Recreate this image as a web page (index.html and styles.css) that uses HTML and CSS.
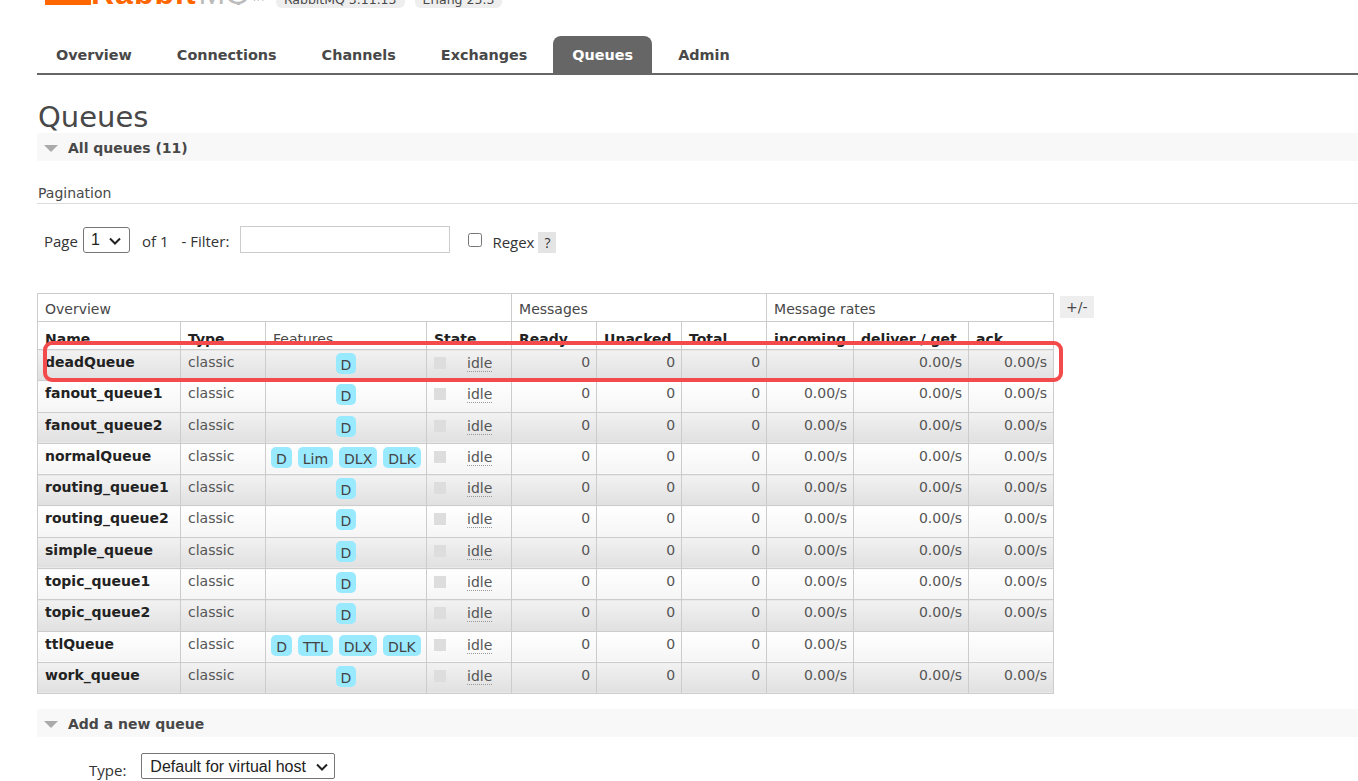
FILE: index.html
```html
<!DOCTYPE html>
<html>
<head>
<meta charset="utf-8">
<title>RabbitMQ Management</title>
<link rel="stylesheet" href="styles.css">
</head>
<body>
<div class="top">
  <div class="brand">
    <div class="logo">
      <svg class="logo-mark" width="46" height="40" viewBox="0 0 46 40"><path d="M0 0h10v28h26V0h10v40H0z" fill="#ff6600"/></svg>
      <span class="logo-rabbit">Rabbit</span><span class="logo-mq">MQ</span><span class="logo-tm">TM</span>
    </div>
    <span class="ver">RabbitMQ 3.11.13</span>
    <span class="ver">Erlang 25.3</span>
  </div>
</div>

<ul class="tabs">
  <li class="tab">Overview</li>
  <li class="tab">Connections</li>
  <li class="tab">Channels</li>
  <li class="tab">Exchanges</li>
  <li class="tab active">Queues</li>
  <li class="tab">Admin</li>
</ul>

<main class="main">
  <h1 class="title">Queues</h1>
  <div class="section-bar"><span class="tri"></span><span>All queues (11)</span></div>

  <h3 class="sub">Pagination</h3>
  <div class="filter">
    <label class="lbl">Page</label>
    <span class="selwrap page">
      <select class="sel sel-page"><option>1</option></select>
      <svg class="chev" width="12" height="8" viewBox="0 0 12 8"><path d="M1 1.5l5 5 5-5" fill="none" stroke="#222" stroke-width="2"/></svg>
    </span>
    <span class="lbl of">of 1</span>
    <span class="lbl flt">- Filter:</span>
    <input class="filter-input" type="text">
    <input class="chk" type="checkbox">
    <span class="lbl regex">Regex</span>
    <span class="help">?</span>
  </div>

  <div class="table-row">
    <div class="table-wrap">
      <table class="list">
        <colgroup>
          <col style="width:143px"><col style="width:85px"><col style="width:161px"><col style="width:85px">
          <col style="width:85px"><col style="width:85px"><col style="width:85px">
          <col style="width:87px"><col style="width:115px"><col style="width:85px">
        </colgroup>
        <thead>
          <tr class="h1r"><th colspan="4">Overview</th><th colspan="3">Messages</th><th colspan="3">Message rates</th></tr>
          <tr class="h2r"><th class="b">Name</th><th class="b">Type</th><th>Features</th><th class="b">State</th><th class="b">Ready</th><th class="b">Unacked</th><th class="b">Total</th><th class="b">incoming</th><th class="b">deliver / get</th><th class="b">ack</th></tr>
        </thead>
        <tbody>
          <tr class="alt1"><td class="name">deadQueue</td><td class="type">classic</td><td class="feat"><div class="badges"><span class="badge">D</span></div></td><td class="state"><div class="st"><span class="sq"></span><span class="idle">idle</span></div></td><td class="num">0</td><td class="num">0</td><td class="num">0</td><td class="num"></td><td class="num">0.00/s</td><td class="num">0.00/s</td></tr>
          <tr class="alt2"><td class="name">fanout_queue1</td><td class="type">classic</td><td class="feat"><div class="badges"><span class="badge">D</span></div></td><td class="state"><div class="st"><span class="sq"></span><span class="idle">idle</span></div></td><td class="num">0</td><td class="num">0</td><td class="num">0</td><td class="num">0.00/s</td><td class="num">0.00/s</td><td class="num">0.00/s</td></tr>
          <tr class="alt1"><td class="name">fanout_queue2</td><td class="type">classic</td><td class="feat"><div class="badges"><span class="badge">D</span></div></td><td class="state"><div class="st"><span class="sq"></span><span class="idle">idle</span></div></td><td class="num">0</td><td class="num">0</td><td class="num">0</td><td class="num">0.00/s</td><td class="num">0.00/s</td><td class="num">0.00/s</td></tr>
          <tr class="alt2"><td class="name">normalQueue</td><td class="type">classic</td><td class="feat"><div class="badges"><span class="badge">D</span><span class="badge">Lim</span><span class="badge">DLX</span><span class="badge">DLK</span></div></td><td class="state"><div class="st"><span class="sq"></span><span class="idle">idle</span></div></td><td class="num">0</td><td class="num">0</td><td class="num">0</td><td class="num">0.00/s</td><td class="num">0.00/s</td><td class="num">0.00/s</td></tr>
          <tr class="alt1"><td class="name">routing_queue1</td><td class="type">classic</td><td class="feat"><div class="badges"><span class="badge">D</span></div></td><td class="state"><div class="st"><span class="sq"></span><span class="idle">idle</span></div></td><td class="num">0</td><td class="num">0</td><td class="num">0</td><td class="num">0.00/s</td><td class="num">0.00/s</td><td class="num">0.00/s</td></tr>
          <tr class="alt2"><td class="name">routing_queue2</td><td class="type">classic</td><td class="feat"><div class="badges"><span class="badge">D</span></div></td><td class="state"><div class="st"><span class="sq"></span><span class="idle">idle</span></div></td><td class="num">0</td><td class="num">0</td><td class="num">0</td><td class="num">0.00/s</td><td class="num">0.00/s</td><td class="num">0.00/s</td></tr>
          <tr class="alt1"><td class="name">simple_queue</td><td class="type">classic</td><td class="feat"><div class="badges"><span class="badge">D</span></div></td><td class="state"><div class="st"><span class="sq"></span><span class="idle">idle</span></div></td><td class="num">0</td><td class="num">0</td><td class="num">0</td><td class="num">0.00/s</td><td class="num">0.00/s</td><td class="num">0.00/s</td></tr>
          <tr class="alt2"><td class="name">topic_queue1</td><td class="type">classic</td><td class="feat"><div class="badges"><span class="badge">D</span></div></td><td class="state"><div class="st"><span class="sq"></span><span class="idle">idle</span></div></td><td class="num">0</td><td class="num">0</td><td class="num">0</td><td class="num">0.00/s</td><td class="num">0.00/s</td><td class="num">0.00/s</td></tr>
          <tr class="alt1"><td class="name">topic_queue2</td><td class="type">classic</td><td class="feat"><div class="badges"><span class="badge">D</span></div></td><td class="state"><div class="st"><span class="sq"></span><span class="idle">idle</span></div></td><td class="num">0</td><td class="num">0</td><td class="num">0</td><td class="num">0.00/s</td><td class="num">0.00/s</td><td class="num">0.00/s</td></tr>
          <tr class="alt2"><td class="name">ttlQueue</td><td class="type">classic</td><td class="feat"><div class="badges"><span class="badge">D</span><span class="badge">TTL</span><span class="badge">DLX</span><span class="badge">DLK</span></div></td><td class="state"><div class="st"><span class="sq"></span><span class="idle">idle</span></div></td><td class="num">0</td><td class="num">0</td><td class="num">0</td><td class="num">0.00/s</td><td class="num"></td><td class="num"></td></tr>
          <tr class="alt1"><td class="name">work_queue</td><td class="type">classic</td><td class="feat"><div class="badges"><span class="badge">D</span></div></td><td class="state"><div class="st"><span class="sq"></span><span class="idle">idle</span></div></td><td class="num">0</td><td class="num">0</td><td class="num">0</td><td class="num">0.00/s</td><td class="num">0.00/s</td><td class="num">0.00/s</td></tr>
        </tbody>
      </table>
      <div class="highlight"></div>
    </div>
    <span class="plusminus">+/-</span>
  </div>

  <div class="section-bar add"><span class="tri"></span><span>Add a new queue</span></div>
  <div class="type-row">
    <label class="type-lbl">Type:</label>
    <span class="selwrap type">
      <select class="sel sel-type"><option>Default for virtual host</option></select>
      <svg class="chev" width="12" height="8" viewBox="0 0 12 8"><path d="M1 1.5l5 5 5-5" fill="none" stroke="#222" stroke-width="2"/></svg>
    </span>
  </div>
</main>
</body>
</html>
```
FILE: styles.css
```css
html, body {
  margin: 0;
  padding: 0;
  background: #fff;
  overflow: hidden;
}
body {
  font-family: "DejaVu Sans", Verdana, sans-serif;
  font-size: 14px;
  color: #484848;
}
.top {
  height: 36px;
}
.brand {
  height: 8px;
  display: flex;
  align-items: flex-end;
  padding-left: 45px;
}
.logo {
  display: flex;
  align-items: flex-end;
  height: 40px;
  margin-bottom: 3px;
}
.logo-mark {
  display: block;
}
.logo-rabbit, .logo-mq {
  font-family: "Liberation Sans", Arial, sans-serif;
  font-weight: bold;
  font-size: 32px;
  line-height: 24px;
  height: 24px;
  overflow: hidden;
  color: #ff6600;
}
.logo-rabbit { margin-left: 0; letter-spacing: 1px; }
.logo-mq {
  color: #bbb;
  font-weight: normal;
  margin-left: 2px;
}
.logo-tm {
  font-size: 8px;
  color: #aaa;
  margin-left: 2px;
  line-height: 12px;
}
.ver {
  background: #eee;
  border-radius: 6px;
  padding: 4px 8px 2px;
  font-size: 12.5px;
  line-height: 12px;
  margin-left: 10px;
  color: #484848;
}
.ver:first-of-type { margin-left: 12px; }

.tabs {
  list-style: none;
  margin: 0 0 0 37px;
  padding: 0;
  display: flex;
  gap: 7px;
  border-bottom: 2px solid #666;
  height: 37px;
}
.tab {
  padding: 0 19px;
  height: 37px;
  line-height: 39px;
  font-weight: bold;
  font-size: 14.4px;
  color: #484848;
}
.tab.active {
  background: #666;
  color: #fff;
  border-radius: 8px 8px 0 0;
}

.main {
  padding-left: 37px;
}
.title {
  margin: 26px 0 0 1px;
  font-size: 29px;
  line-height: 32px;
  font-weight: normal;
  color: #484848;
}
.section-bar {
  background: #f8f8f8;
  height: 28px;
  display: flex;
  align-items: center;
  font-weight: bold;
  font-size: 14px;
  color: #484848;
  padding-top: 1px;
  box-sizing: border-box;
}
.tri {
  width: 0;
  height: 0;
  border-left: 7px solid transparent;
  border-right: 7px solid transparent;
  border-top: 7px solid #aaa;
  margin: 1px 10px 0 7px;
}
.sub {
  margin: 22px 0 0 0;
  padding: 0 0 0 1px;
  font-size: 14px;
  font-weight: normal;
  line-height: 20px;
  height: 20px;
  border-bottom: 1px solid #ddd;
  color: #484848;
}
.filter {
  margin-top: 22px;
  display: flex;
  align-items: center;
  height: 27px;
  padding-left: 7px;
}
.lbl {
  font-family: "Open Sans", sans-serif;
  font-size: 15px;
  color: #333;
  margin-top: 2px;
}
.selwrap {
  position: relative;
  display: inline-flex;
}
.chev {
  position: absolute;
  top: 10px;
  pointer-events: none;
}
.selwrap.page { margin-left: 5px; }
.selwrap.page .chev { left: 26px; }
.sel {
  -webkit-appearance: none;
  appearance: none;
  height: 26px;
  box-sizing: border-box;
  font-family: "Liberation Sans", Arial, sans-serif;
  font-size: 16px;
  color: #222;
  border: 1px solid #767676;
  border-radius: 3px;
  background: #fff;
  margin: 0;
}
.sel-page {
  width: 47px;
  padding: 0 0 0 7px;
}
.of { margin-left: 12px; }
.flt { margin-left: 13px; }
.filter-input {
  margin: 0 0 0 11px;
  width: 210px;
  height: 27px;
  box-sizing: border-box;
  border: 1px solid #ccc;
  padding: 0 4px;
}
.chk {
  margin: 0 0 0 18px;
  width: 14px;
  height: 14px;
}
.regex { margin-left: 10px; margin-top: 5px; }
.help {
  margin-left: 4px;
  margin-top: 5px;
  background: #e4e4e4;
  width: 18px;
  height: 21px;
  line-height: 21px;
  text-align: center;
  font-family: "Open Sans", sans-serif;
  font-size: 14px;
  color: #333;
}

.table-row {
  margin-top: 40px;
  display: flex;
  align-items: flex-start;
}
.table-wrap {
  position: relative;
}
.list {
  border-collapse: collapse;
  table-layout: fixed;
  width: 1017px;
}
.list th, .list td {
  border: 1px solid #ccc;
  text-align: left;
  vertical-align: top;
  padding: 0 7px;
  line-height: 16px;
  overflow: hidden;
  white-space: nowrap;
}
.list th {
  font-weight: normal;
  color: #484848;
  background: #fff;
}
.h1r { height: 28px; }
.h1r th { padding-top: 7px; }
.h2r { height: 28px; }
.h2r th { padding-top: 9px; }
.list th.b {
  font-weight: bold;
  color: #222;
}
.list tbody tr { height: 31.3px; }
.list td { padding-top: 4px; color: #555; }
.alt1 td { background: linear-gradient(#f2f2f2, #e0e0e0); }
.alt2 td { background: linear-gradient(#fff, #f5f5f5); }
.list td.name {
  font-weight: bold;
  color: #222;
}
.list td.num { text-align: right; padding-right: 6px; }
.list td.feat { padding: 3px 0 0 0; }
.badges {
  display: flex;
  justify-content: center;
  gap: 6px;
}
.badge {
  background: #99e9ff;
  border-radius: 5px;
  padding: 3px 5px 0;
  height: 21px;
  box-sizing: border-box;
  line-height: 19px;
  color: #444;
  font-size: 14px;
}
.list td.state { padding-top: 5px; }
.st { display: flex; align-items: flex-start; }
.sq {
  width: 12px;
  height: 12px;
  background: #ddd;
  margin-top: 2px;
}
.idle {
  margin-left: 21px;
  line-height: 16px;
  border-bottom: 1px dotted #999;
}
.highlight {
  position: absolute;
  left: 6px;
  top: 48px;
  width: 1020px;
  height: 41px;
  box-sizing: border-box;
  border: 4px solid #f34b4b;
  border-radius: 9px;
  pointer-events: none;
}
.plusminus {
  margin: 3px 0 0 6px;
  background: #eee;
  padding: 0 6px;
  height: 22px;
  line-height: 22px;
  color: #484848;
}
.add { margin-top: 15px; }
.type-row {
  margin-top: 15px;
  display: flex;
  align-items: center;
  padding-left: 52px;
}
.type-lbl {
  font-family: "Open Sans", sans-serif;
  font-size: 15px;
  color: #333;
  margin-top: 8px;
}
.selwrap.type { margin-left: 15px; }
.selwrap.type .chev { left: 175px; }
.sel-type {
  width: 194px;
  padding: 0 0 0 8px;
  border-radius: 2px;
}
```
